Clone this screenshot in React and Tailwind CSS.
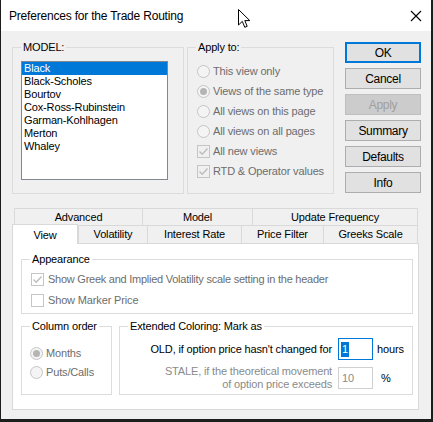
import React from 'react';

const models = ['Black', 'Black-Scholes', 'Bourtov', 'Cox-Ross-Rubinstein', 'Garman-Kohlhagen', 'Merton', 'Whaley'];

const Radio = ({ checked }) => (
  <span className="w-[13px] h-[13px] rounded-full border border-[#c5c5c5] bg-[#f4f4f4] flex items-center justify-center shrink-0">
    {checked && <span className="w-[7px] h-[7px] rounded-full bg-[#b5b5b5]" />}
  </span>
);

const Check = ({ checked }) => (
  <span className="w-[13px] h-[13px] border border-[#c5c5c5] flex items-center justify-center shrink-0">
    {checked && (
      <svg width="11" height="11" viewBox="0 0 11 11">
        <path d="M1.5 5.5 L4.2 8.2 L9.5 2.5" fill="none" stroke="#bdbdbd" strokeWidth="1.4" />
      </svg>
    )}
  </span>
);

const Group = ({ label, bg, className, children }) => (
  <div className={`relative border border-[#dcdcdc] ${className}`}>
    <span className={`absolute top-[-8px] left-[8px] px-[2px] leading-[14px] text-black ${bg}`}>{label}</span>
    {children}
  </div>
);

const Button = ({ children, primary, disabled }) => (
  <div
    className={`h-[21px] flex items-center justify-center text-[12px] tracking-[-0.3px] ${
      primary
        ? 'border-2 border-[#0078d7] bg-[#e1e1e1] text-black'
        : disabled
        ? 'border border-[#bfbfbf] bg-[#cccccc] text-[#a0a0a0]'
        : 'border border-[#adadad] bg-[#e1e1e1] text-black'
    }`}
  >
    {children}
  </div>
);

const Tab = ({ children, className }) => (
  <div className={`flex items-center justify-center border border-b-0 border-[#d9d9d9] bg-[#f0f0f0] -ml-px ${className}`}>
    {children}
  </div>
);

export default function App() {
  return (
    <div className="w-[433px] h-[422px] bg-[#1d1d1d] font-['Liberation_Sans',Arial,sans-serif] text-[11px] tracking-[-0.15px] relative overflow-hidden">
      <div className="ml-[1px] w-[430px] h-[419px] bg-[#f0f0f0] flex flex-col">
        {/* title bar */}
        <div className="h-[31px] bg-white flex items-center justify-between pl-[8px] pr-[9px] shrink-0">
          <span className="text-[12px] tracking-[-0.2px] text-black">Preferences for the Trade Routing</span>
          <svg width="12" height="12" viewBox="0 0 12 12">
            <path d="M1 1 L11 11 M11 1 L1 11" stroke="#000" strokeWidth="1.1" />
          </svg>
        </div>

        <div className="pl-[11px] pt-[11px] flex items-start">
          <Group label="MODEL:" bg="bg-[#f0f0f0]" className="mt-[5px] w-[172px] h-[147px] pl-[8px] pt-[13px]">
            <div className="w-[147px] h-[119px] bg-white border border-[#828790]">
              {models.map((m, i) => (
                <div
                  key={m}
                  className={`h-[13px] leading-[13px] pl-[2px] ${i === 0 ? 'bg-[#0078d7] text-white' : 'text-black'}`}
                >
                  {m}
                </div>
              ))}
            </div>
          </Group>

          <Group label="Apply to:" bg="bg-[#f0f0f0]" className="mt-[5px] ml-[3px] w-[147px] h-[147px] pl-[9px] pt-[13px]">
            {[
              ['This view only', 'r', false],
              ['Views of the same type', 'r', true],
              ['All views on this page', 'r', false],
              ['All views on all pages', 'r', false],
              ['All new views', 'c', true],
              ['RTD & Operator values', 'c', true],
            ].map(([t, k, on]) => (
              <div key={t} className="h-[20px] flex items-center gap-[3px] text-[#6d6d6d]">
                {k === 'r' ? <Radio checked={on} /> : <Check checked={on} />}
                <span>{t}</span>
              </div>
            ))}
          </Group>

          <div className="ml-[11px] w-[76px] flex flex-col gap-[5px]">
            <Button primary>OK</Button>
            <Button>Cancel</Button>
            <Button disabled>Apply</Button>
            <Button>Summary</Button>
            <Button>Defaults</Button>
            <Button>Info</Button>
          </div>
        </div>

        {/* tab control */}
        <div className="ml-[11px] mt-[14px] w-[407px] flex flex-col text-black">
          <div className="flex h-[17px] pl-[2px]">
            <Tab className="w-[129px] ml-0">Advanced</Tab>
            <Tab className="w-[111px]">Model</Tab>
            <Tab className="flex-1 mr-[1px]">Update Frequency</Tab>
          </div>
          <div className="flex h-[18px] items-end relative z-10">
            <div className="w-[66px] h-[20px] bg-white border border-b-0 border-[#d9d9d9] flex justify-center pt-[2px] mb-[-1px]">
              View
            </div>
            <Tab className="w-[70px] h-[18px] ml-0">Volatility</Tab>
            <Tab className="w-[95px] h-[18px]">Interest Rate</Tab>
            <Tab className="w-[83px] h-[18px]">Price Filter</Tab>
            <Tab className="flex-1 h-[18px] mr-[1px]">Greeks Scale</Tab>
          </div>
          <div className="h-[167px] bg-white border border-[#d9d9d9] pl-[8px] pr-[5px] pt-[15px]">
            <Group label="Appearance" bg="bg-white" className="h-[55px] pl-[9px] pt-[9px]">
              <div className="h-[21px] flex items-center gap-[4px] text-[#6d6d6d]">
                <Check checked />
                <span className="tracking-[-0.25px]">Show Greek and Implied Volatility scale setting in the header</span>
              </div>
              <div className="h-[20px] flex items-center gap-[4px] text-[#6d6d6d]">
                <Check />
                <span>Show Marker Price</span>
              </div>
            </Group>

            <div className="flex mt-[12px] gap-[7px]">
              <Group label="Column order" bg="bg-white" className="w-[91px] h-[69px] pl-[8px] pt-[17px]">
                <div className="h-[19px] flex items-center gap-[3px] text-[#6d6d6d]">
                  <Radio checked />
                  <span>Months</span>
                </div>
                <div className="h-[19px] flex items-center gap-[3px] text-[#6d6d6d]">
                  <Radio />
                  <span>Puts/Calls</span>
                </div>
              </Group>

              <Group label="Extended Coloring: Mark as" bg="bg-white" className="flex-1 h-[69px] pt-[11px]">
                <div className="grid grid-cols-[212px_35px_auto] gap-y-[5px] items-center">
                  <span className="text-right text-black">OLD, if option price hasn't changed for</span>
                  <div className="ml-[6px] w-[35px] h-[22px] border border-[#0078d7] bg-white flex items-center pl-[2px]">
                    <span className="bg-[#0078d7] text-white px-[1px] leading-[15px]">1</span>
                  </div>
                  <span className="ml-[10px] text-black">hours</span>

                  <span className="text-right text-[#8a8a8a] leading-[13px]">
                    STALE, if the theoretical movement
                    <br />
                    of option price exceeds
                  </span>
                  <div className="ml-[6px] w-[35px] h-[22px] border border-[#d0d0d0] bg-white flex items-center pl-[3px] text-[#8a8a8a]">
                    10
                  </div>
                  <span className="ml-[14px] text-black">%</span>
                </div>
              </Group>
            </div>
          </div>
        </div>
      </div>

      {/* mouse pointer */}
      <svg className="absolute left-[238px] top-[9px]" width="13" height="20" viewBox="0 0 13 20">
        <path d="M0.5 0.5 L0.5 16 L4.3 12.4 L6.8 18.3 L9.2 17.3 L6.8 11.6 L11.8 11.6 Z" fill="#fff" stroke="#000" strokeWidth="1" />
      </svg>
    </div>
  );
}
